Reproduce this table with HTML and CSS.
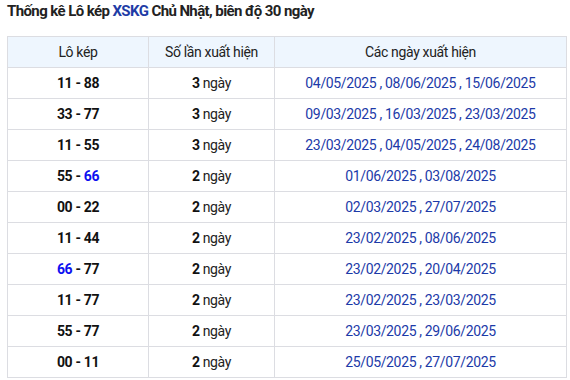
FILE: index.html
```html
<!DOCTYPE html>
<html>
<head>
<meta charset="utf-8">
<link rel="stylesheet" href="styles.css">
</head>
<body>
<h2 class="title">Thống kê Lô kép <span class="xs">XSKG</span> Chủ Nhật, biên độ 30 ngày</h2>
<table class="stats">
<thead>
<tr><th class="c1">Lô kép</th><th class="c2">Số lần xuất hiện</th><th class="c3">Các ngày xuất hiện</th></tr>
</thead>
<tbody>
<tr><td class="pair">11 - 88</td><td><b>3</b> ngày</td><td class="dates">04/05/2025 , 08/06/2025 , 15/06/2025</td></tr>
<tr><td class="pair">33 - 77</td><td><b>3</b> ngày</td><td class="dates">09/03/2025 , 16/03/2025 , 23/03/2025</td></tr>
<tr><td class="pair">11 - 55</td><td><b>3</b> ngày</td><td class="dates">23/03/2025 , 04/05/2025 , 24/08/2025</td></tr>
<tr><td class="pair">55 - <span class="hl">66</span></td><td><b>2</b> ngày</td><td class="dates">01/06/2025 , 03/08/2025</td></tr>
<tr><td class="pair">00 - 22</td><td><b>2</b> ngày</td><td class="dates">02/03/2025 , 27/07/2025</td></tr>
<tr><td class="pair">11 - 44</td><td><b>2</b> ngày</td><td class="dates">23/02/2025 , 08/06/2025</td></tr>
<tr><td class="pair"><span class="hl">66</span> - 77</td><td><b>2</b> ngày</td><td class="dates">23/02/2025 , 20/04/2025</td></tr>
<tr><td class="pair">11 - 77</td><td><b>2</b> ngày</td><td class="dates">23/02/2025 , 23/03/2025</td></tr>
<tr><td class="pair">55 - 77</td><td><b>2</b> ngày</td><td class="dates">23/03/2025 , 29/06/2025</td></tr>
<tr><td class="pair">00 - 11</td><td><b>2</b> ngày</td><td class="dates">25/05/2025 , 27/07/2025</td></tr>
</tbody>
</table>
</body>
</html>
```
FILE: styles.css
```css
html, body {
  margin: 0;
  padding: 0;
  background: #fff;
}
body {
  padding: 2px 7px 0 7px;
  font-family: Roboto, "Liberation Sans", sans-serif;
  color: #222;
}
.title {
  margin: 0 0 16px 0;
  font-size: 15px;
  font-weight: bold;
  line-height: 18px;
  letter-spacing: -0.6px;
  color: #222;
}
.xs {
  color: #1f3ca6;
}
.stats {
  width: 560px;
  border-collapse: collapse;
  table-layout: fixed;
  font-size: 14px;
  letter-spacing: -0.35px;
}
.stats th, .stats td {
  border: 1px solid #dcdde2;
  height: 30px;
  padding: 0;
  text-align: center;
  vertical-align: middle;
}
.stats th {
  background: #eef6fe;
  font-weight: normal;
  color: #222;
}
.c1 { width: 140px; }
.c2 { width: 125px; }
.c3 { width: auto; }
.pair {
  font-weight: bold;
  color: #111;
}
.hl {
  color: #0d10f0;
}
.stats b {
  color: #111;
}
.dates {
  color: #1c3aa8;
}
```
